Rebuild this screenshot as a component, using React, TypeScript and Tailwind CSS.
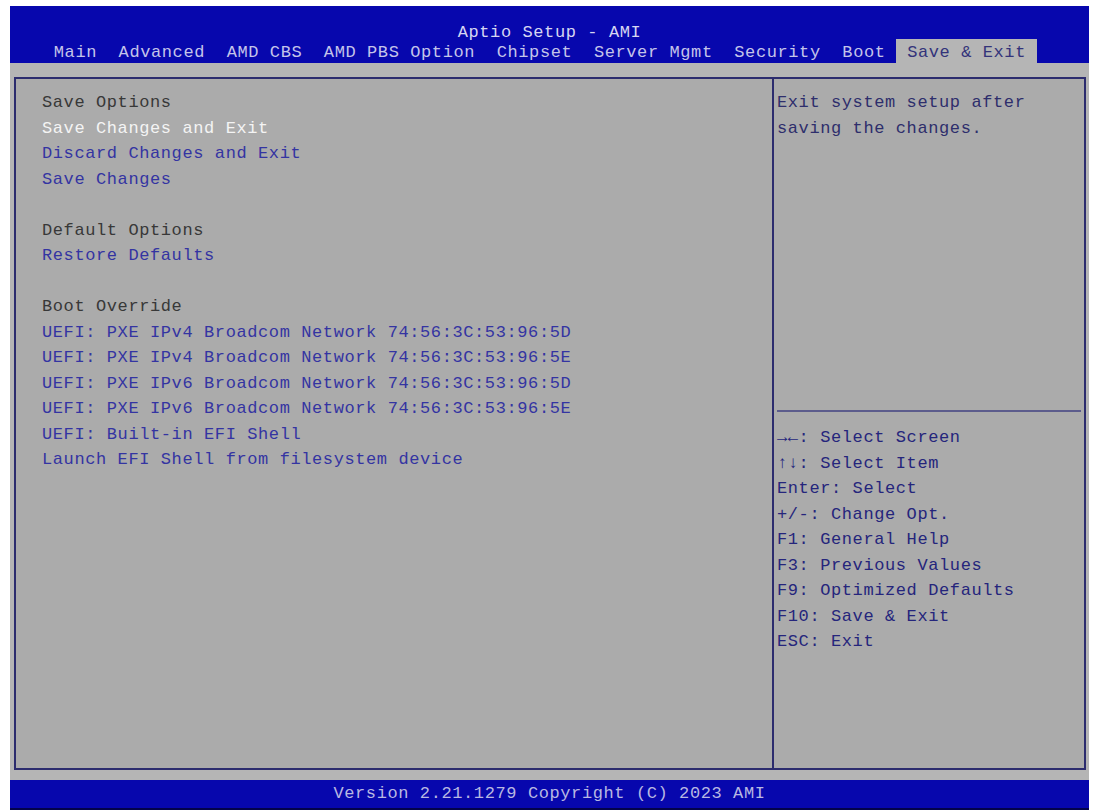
import React from "react";

const mono = { fontFamily: '"Liberation Mono", "DejaVu Sans Mono", monospace' };

const tabs = [
  "Main",
  "Advanced",
  "AMD CBS",
  "AMD PBS Option",
  "Chipset",
  "Server Mgmt",
  "Security",
  "Boot",
  "Save & Exit",
];

type Line = { text: string; kind: "head" | "item" | "sel" | "blank" };

const left: Line[] = [
  { text: "Save Options", kind: "head" },
  { text: "Save Changes and Exit", kind: "sel" },
  { text: "Discard Changes and Exit", kind: "item" },
  { text: "Save Changes", kind: "item" },
  { text: "", kind: "blank" },
  { text: "Default Options", kind: "head" },
  { text: "Restore Defaults", kind: "item" },
  { text: "", kind: "blank" },
  { text: "Boot Override", kind: "head" },
  { text: "UEFI: PXE IPv4 Broadcom Network 74:56:3C:53:96:5D", kind: "item" },
  { text: "UEFI: PXE IPv4 Broadcom Network 74:56:3C:53:96:5E", kind: "item" },
  { text: "UEFI: PXE IPv6 Broadcom Network 74:56:3C:53:96:5D", kind: "item" },
  { text: "UEFI: PXE IPv6 Broadcom Network 74:56:3C:53:96:5E", kind: "item" },
  { text: "UEFI: Built-in EFI Shell", kind: "item" },
  { text: "Launch EFI Shell from filesystem device", kind: "item" },
];

const help = [
  "\u2192\u2190: Select Screen",
  "\u2191\u2193: Select Item",
  "Enter: Select",
  "+/-: Change Opt.",
  "F1: General Help",
  "F3: Previous Values",
  "F9: Optimized Defaults",
  "F10: Save & Exit",
  "ESC: Exit",
];

export default function App() {
  return (
    <div
      className="w-[1095px] h-[812px] bg-white overflow-hidden text-[17px] tracking-[0.6px]"
      style={mono}
    >
      <div className="ml-[10px] mt-[6px] w-[1079px] h-[804px] bg-[#b5b5b5] flex flex-col">
        {/* Header */}
        <div className="h-[57px] bg-[#0707ad] flex flex-col shrink-0">
          <div className="h-[33px] pt-[16px] leading-[22px] text-center text-[#d6d6f2] whitespace-pre">
            Aptio Setup - AMI
          </div>
          <div className="h-[24px] flex pl-[33px] whitespace-pre">
            {tabs.map((t) => (
              <span
                key={t}
                className={
                  t === "Save & Exit"
                    ? "px-[10.8px] leading-[27px] bg-[#b5b5b5] text-[#33337a]"
                    : "px-[10.8px] leading-[27px] text-[#c4c4ea]"
                }
              >
                {t}
              </span>
            ))}
          </div>
        </div>

        {/* Frame */}
        <div className="mt-[14px] ml-[4px] w-[1072px] h-[693px] border-2 border-[#2c2c6e] bg-[#ababab] flex">
          <div className="w-[756px] pt-[11px] pl-[26px] leading-[25.5px] whitespace-pre">
            {left.map((l, i) => (
              <div
                key={i}
                className={
                  l.kind === "head"
                    ? "h-[25.5px] text-[#383838]"
                    : l.kind === "sel"
                    ? "h-[25.5px] text-[#f4f4f4]"
                    : l.kind === "item"
                    ? "h-[25.5px] text-[#3434a2]"
                    : "h-[25.5px]"
                }
              >
                {l.text}
              </div>
            ))}
          </div>
          <div className="flex-1 border-l-2 border-[#2c2c6e] flex flex-col leading-[25.5px] whitespace-pre">
            <div className="h-[331px] pt-[11px] pl-[3px] text-[#2e2e6c]">
              <div className="h-[25.5px]">Exit system setup after</div>
              <div className="h-[25.5px]">saving the changes.</div>
            </div>
            <div className="mx-[3px] h-[2px] bg-[#5c5c8c]" />
            <div className="pt-[13px] pl-[3px] text-[#25257c]">
              {help.map((h) => (
                <div key={h} className="h-[25.5px]">
                  {h}
                </div>
              ))}
            </div>
          </div>
        </div>

        {/* Footer */}
        <div className="mt-[10px] h-[30px] bg-[#0707ad] border-b-2 border-[#03034a] leading-[28px] text-center text-[#b8b8e2] whitespace-pre">
          Version 2.21.1279 Copyright (C) 2023 AMI
        </div>
      </div>
    </div>
  );
}
